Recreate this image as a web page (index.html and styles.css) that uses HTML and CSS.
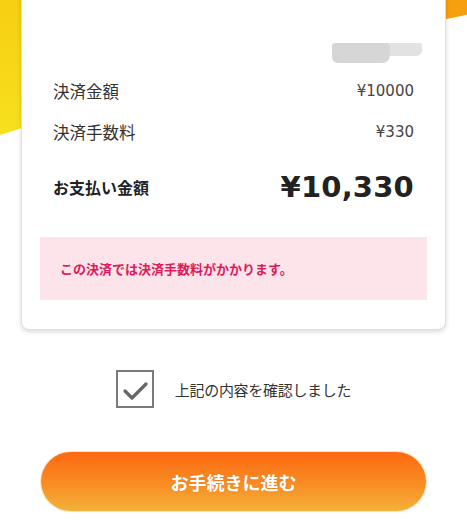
FILE: index.html
```html
<!DOCTYPE html>
<html lang="ja">
<head>
<meta charset="utf-8">
<link rel="stylesheet" href="styles.css">
</head>
<body>
<div class="page">
  <div class="deco deco-yellow"></div>
  <div class="deco deco-orange"></div>
  <div class="card">
    <div class="blob"><span class="blob-a"></span><span class="blob-b"></span></div>
    <div class="row row-sm row-first"><span class="label">決済金額</span><span class="num">¥10000</span></div>
    <div class="row row-sm"><span class="label">決済手数料</span><span class="num">¥330</span></div>
    <div class="row row-total"><span class="label label-bold">お支払い金額</span><span class="num num-total">¥10,330</span></div>
    <div class="notice">この決済では決済手数料がかかります。</div>
  </div>
  <div class="confirm">
    <span class="checkbox">
      <svg width="34" height="34" viewBox="0 0 34 34"><path d="M7 19 L14 26 L28 12" fill="none" stroke="#666" stroke-width="3.2" stroke-linecap="round" stroke-linejoin="round"/></svg>
    </span>
    <span class="confirm-text">上記の内容を確認しました</span>
  </div>
  <div class="btn">お手続きに進む</div>
</div>
</body>
</html>
```
FILE: styles.css
```css
html, body {
  margin: 0;
  padding: 0;
  background: #fff;
}
body {
  width: 467px;
  height: 526px;
  overflow: hidden;
  font-family: "Noto Sans CJK JP", "Noto Sans", sans-serif;
  color: #333;
}
.page {
  position: relative;
  width: 467px;
  height: 526px;
  overflow: hidden;
}
.deco {
  position: absolute;
  top: 0;
}
.deco-yellow {
  left: 0;
  width: 30px;
  height: 135px;
  background: linear-gradient(180deg, #f6cf12 0%, #f7e01e 100%);
  clip-path: polygon(0 0, 100% 0, 100% 93%, 0 100%);
}
.deco-orange {
  right: 0;
  width: 30px;
  height: 21px;
  background: #f6a00f;
  clip-path: polygon(0 0, 100% 0, 100% 70%, 0 100%);
}
.card {
  position: relative;
  margin: -12px 21px 0;
  height: 342px;
  box-sizing: border-box;
  padding-top: 54px;
  background: #fff;
  border: 1px solid #dedede;
  border-radius: 8px;
  box-shadow: 0 2px 5px rgba(0, 0, 0, 0.14);
}
.blob {
  display: flex;
  align-items: flex-start;
  justify-content: flex-end;
  height: 20px;
  margin-right: 23px;
}
.blob-a {
  display: block;
  width: 58px;
  height: 20px;
  background: #d6d6d6;
  border-radius: 3px 2px 8px 6px;
}
.blob-b {
  display: block;
  width: 32px;
  height: 13px;
  background: #e2e2e2;
  border-radius: 0 2px 6px 0;
}
.row {
  display: flex;
  align-items: center;
  justify-content: space-between;
  padding: 0 31px 0 31px;
}
.row-sm {
  height: 41px;
}
.row-first {
  margin-top: 7px;
}
.row-total {
  height: 52px;
  margin-top: 9px;
}
.label {
  font-size: 16.5px;
  color: #333;
}
.label-bold {
  font-weight: 700;
  font-size: 16px;
  color: #222;
}
.num {
  font-family: "DejaVu Sans", "Noto Sans", sans-serif;
  font-size: 15px;
  color: #444;
}
.num-total {
  font-size: 29px;
  font-weight: 700;
  color: #222;
  letter-spacing: 0.2px;
}
.notice {
  margin: 24px 18px 0;
  height: 63px;
  box-sizing: border-box;
  padding-left: 20px;
  display: flex;
  align-items: center;
  background: #fde4ea;
  color: #e0195b;
  font-size: 13px;
  font-weight: 700;
}
.confirm {
  display: flex;
  align-items: center;
  justify-content: center;
  gap: 21px;
  margin-top: 40px;
  height: 38px;
}
.checkbox {
  display: flex;
  align-items: center;
  justify-content: center;
  width: 38px;
  height: 38px;
  box-sizing: border-box;
  border: 2px solid #7a7a7a;
  background: #fff;
}
.confirm-text {
  font-size: 15px;
  color: #333;
  letter-spacing: -0.3px;
}
.btn {
  margin: 44px 41px 0;
  height: 59px;
  border-radius: 30px;
  background: linear-gradient(180deg, #fd6812 0%, #f98a22 50%, #f3b13a 100%);
  box-shadow: 0 0 0 1px rgba(250, 180, 90, 0.35);
  display: flex;
  align-items: center;
  justify-content: center;
  color: #fff;
  font-size: 18px;
  font-weight: 700;
  text-shadow: 0 0 2px rgba(200, 80, 0, 0.25);
}
```
